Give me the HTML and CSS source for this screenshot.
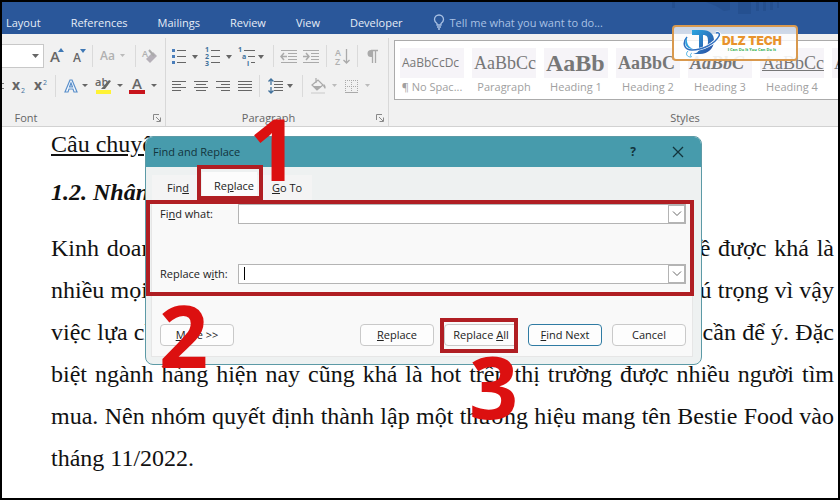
FILE: index.html
```
<!DOCTYPE html>
<html lang="vi">
<head>
  <meta charset="UTF-8" />
  <meta name="viewport" content="width=device-width, initial-scale=1.0"/>
  <title>Find and Replace</title>
  <link rel="stylesheet" href="styles.css">
</head>
<body>
  <div class="window">
    <nav class="tabs">
      <a href="#">Layout</a>
      <a href="#">References</a>
      <a href="#">Mailings</a>
      <a href="#">Review</a>
      <a href="#">View</a>
      <a href="#">Developer</a>
      <a href="#" class="tell-me">
        <svg width="12" height="16" viewBox="0 0 12 16" fill="none" stroke="currentColor" stroke-width="1.3"><path d="M4 11V9.500C2.500 8.500 1.500 7.300 1.500 5.500a4.500 4.500 0 0 1 9 0c0 1.800-1 3-2.500 4V11zM4 13h4M5 15h2"/></svg>
        Tell me what you want to do...
      </a>
      <svg class="circuit" width="120" height="14" viewBox="0 0 120 14"><path fill="#224b87" d="M0 0h3v6H0zM34 0h24v8l-6 1-8-5zM66 0h13v12H66zM84 0h3v9h-3zM91 0h3v9h-3zM98 0h3v8h-3zM105 0h2v6h-2z"/></svg>
    </nav>

    <div class="ribbon">
      <section class="group font-group">
        <div class="tools">
          <button class="size-box" aria-label="Font size"><svg width="7" height="4"><path d="M0 0h7L3.500 4z" fill="#666"/></svg></button>
          <button class="tool" aria-label="Grow font"><svg width="22" height="22"><text x="6" y="17" class="glyph big">A</text><path d="M14 7l3-4 3 4z" fill="#3f78b5"/></svg></button>
          <button class="tool" aria-label="Shrink font"><svg width="22" height="22"><text x="7" y="17" class="glyph mid">A</text><path d="M14 4h6l-3 4z" fill="#3f78b5"/></svg></button>
          <i class="sep"></i>
          <button class="tool off" aria-label="Change case"><svg width="34" height="22"><text x="3" y="15" class="glyph case">Aa</text><path d="M23 9h5l-2.500 3z" fill="#bbb"/></svg></button>
          <i class="sep"></i>
          <button class="tool off" aria-label="Clear formatting"><svg width="22" height="22"><text x="2" y="12" class="glyph small">A</text><path d="M6 14l7-7 4 4-7 7z" fill="#b5b0b8"/><path d="M9 5l5 6" stroke="#aaa" stroke-width="2"/></svg></button>
        </div>
        <div class="tools">
          <span class="stub"></span>
          <button class="tool" aria-label="Subscript"><svg width="22" height="22"><text x="5" y="15" class="glyph x">x</text><text x="14" y="18" class="index">2</text></svg></button>
          <button class="tool" aria-label="Superscript"><svg width="22" height="22"><text x="5" y="15" class="glyph x">x</text><text x="14" y="10" class="index">2</text></svg></button>
          <i class="sep"></i>
          <button class="tool" aria-label="Text effects"><svg width="34" height="22"><path d="M5 17L10 5h2l5 12h-3l-1-3H9l-1 3zM9.500 12h3L11 8z" fill="#f8fbff" stroke="#5a8fca" stroke-width="1.200"/><path d="M22 9h6l-3 3z" fill="#666"/></svg></button>
          <button class="tool" aria-label="Highlight"><svg width="34" height="22"><text x="1" y="11" class="glyph ab">ab</text><path d="M7 14l8-9 2 1-6 8z" fill="#666"/><path fill="#fff335" d="M2 15h15v4H2z"/><path d="M23 9h6l-3 3z" fill="#666"/></svg></button>
          <button class="tool" aria-label="Font color"><svg width="34" height="22"><text x="4" y="14" class="glyph big">A</text><path fill="#c8141c" d="M1 15h16v4H1z"/><path d="M23 9h6l-3 3z" fill="#666"/></svg></button>
        </div>
        <footer>Font</footer>
        <svg class="launcher" width="8" height="8" fill="none" stroke="#888"><path d="M.5 6V.5H6M3 3l4 4M7.500 3.500v4h-4"/></svg>
      </section>

      <section class="group para-group">
        <div class="tools">
          <button class="tool" aria-label="Bullets"><svg width="34" height="22"><path fill="#4a7ebb" d="M5 4h3v3H5zM5 10h3v3H5zM5 16h3v3H5z"/><path d="M10 5.500h9M10 11.500h9M10 17.500h9" stroke="#666"/><path d="M25 10h6l-3 4z" fill="#666"/></svg></button>
          <button class="tool" aria-label="Numbering"><svg width="34" height="22"><text x="4" y="7" class="num">1</text><text x="4" y="14" class="num">2</text><text x="4" y="21" class="num">3</text><path d="M10 5.500h9M10 11.500h9M10 17.500h9" stroke="#666"/><path d="M25 10h6l-3 4z" fill="#666"/></svg></button>
          <button class="tool" aria-label="Multilevel list"><svg width="34" height="22"><text x="3" y="7" class="num">1</text><text x="7" y="14" class="num">a</text><text x="12" y="21" class="num">i</text><path d="M9 5.500h11M13 11.500h7M16 17.500h4" stroke="#666"/><path d="M23 10h6l-3 4z" fill="#666"/></svg></button>
          <i class="sep"></i>
          <button class="tool" aria-label="Decrease indent"><svg width="22" height="22" fill="none" stroke="#aaa"><path d="M3 5.500h16M10 8.500h9M10 11.500h9M10 14.500h9M3 17.500h16"/><path d="M3 11.500h6M6 8l-3 3.500L6 15" stroke-width="1.500"/></svg></button>
          <button class="tool" aria-label="Increase indent"><svg width="22" height="22" fill="none" stroke="#aaa"><path d="M3 5.500h16M11 8.500h8M11 11.500h8M11 14.500h8M3 17.500h16"/><path d="M3 11.500h6M6 8l3 3.500L6 15" stroke-width="1.500"/></svg></button>
          <i class="sep"></i>
          <button class="tool off" aria-label="Sort"><svg width="22" height="22"><text x="4" y="11" class="glyph small">A</text><text x="4" y="20" class="glyph small">Z</text><path d="M15.500 4v14M12.500 15l3 3 3-3" fill="none" stroke="#aaa" stroke-width="1.300"/></svg></button>
          <i class="sep"></i>
          <button class="tool" aria-label="Show marks"><svg width="22" height="22"><path d="M9 5.500h7M10.500 5v13M13.500 5v13" fill="none" stroke="#aaa" stroke-width="1.300"/><path d="M9 5h1.500v7H9a3.500 3.500 0 0 1 0-7z" fill="#aaa"/></svg></button>
        </div>
        <div class="tools">
          <button class="tool" aria-label="Align left"><svg width="22" height="22" stroke="#666"><path d="M5 6.500h14M5 9.500h9M5 12.500h14M5 15.500h9"/></svg></button>
          <button class="tool" aria-label="Center"><svg width="22" height="22" stroke="#666"><path d="M5 6.500h14M7 9.500h10M5 12.500h14M7 15.500h10"/></svg></button>
          <button class="tool" aria-label="Align right"><svg width="22" height="22" stroke="#666"><path d="M5 6.500h14M10 9.500h9M5 12.500h14M10 15.500h9"/></svg></button>
          <button class="tool" aria-label="Justify"><svg width="22" height="22" stroke="#666"><path d="M5 6.500h14M5 9.500h14M5 12.500h14M5 15.500h14"/></svg></button>
          <i class="sep"></i>
          <button class="tool" aria-label="Line spacing"><svg width="34" height="22" fill="none"><path d="M10 6.500h9M10 9.500h9M10 12.500h9M10 15.500h9" stroke="#666"/><path d="M7 4v6M7 12v6M4.500 6.500L7 4l2.500 2.500M4.500 15.500L7 18l2.500-2.500" stroke="#41719c" stroke-width="1.300"/><path d="M23 9h6l-3 4z" fill="#666"/></svg></button>
          <i class="sep"></i>
          <button class="tool" aria-label="Shading"><svg width="34" height="22" fill="none"><path d="M5 10l6-5 5 5-6 5zM9 3v5" stroke="#aaa" stroke-width="1.200"/><path d="M6 11h9l-5 4zM17 9c2 2 2 4 1 5l-2-3z" fill="#aaa"/><path d="M4 17h14v2H4z" fill="#ddd"/><path d="M25 9h5l-2.500 3z" fill="#bbb"/></svg></button>
          <button class="tool" aria-label="Borders"><svg width="34" height="22" fill="none" stroke="#aaa"><path d="M4.500 5v12M10.500 5v12M16.500 5v12M4 5.500h13M4 11.500h13" stroke-dasharray="1 1"/><path d="M4 17.500h13"/><path d="M24 9h5l-2.500 3z" fill="#bbb" stroke="none"/></svg></button>
        </div>
        <footer>Paragraph</footer>
        <svg class="launcher" width="8" height="8" fill="none" stroke="#888"><path d="M.5 6V.5H6M3 3l4 4M7.500 3.500v4h-4"/></svg>
      </section>

      <section class="group styles-group">
        <div class="gallery">
          <button class="style"><span class="preview plain">AaBbCcDc</span>¶ No Spac...</button>
          <button class="style"><span class="preview serif">AaBbCc</span>Paragraph</button>
          <button class="style"><span class="preview h1">AaBb</span>Heading 1</button>
          <button class="style"><span class="preview h2">AaBbC</span>Heading 2</button>
          <button class="style"><span class="preview h3">AaBbC</span>Heading 3</button>
          <button class="style"><span class="preview h4">AaBbCc</span>Heading 4</button>
          <button class="style"><span class="preview serif">AaBbCc</span>Heading 5</button>
          <button class="style"><span class="preview serif">AaBbCc</span>Heading 6</button>
        </div>
        <footer>Styles</footer>
      </section>
    </div>

    <main class="page">
      <p class="underlined">Câu chuyện thương hiệu</p>
      <h2>1.2. Nhân sự</h2>
      <p class="story">
        <span>Kinh doanh thực phẩm ăn uống hiện nay đang là một trong vấn đề được khá là</span>
        <span>nhiều mọi người quan tâm, đặc biệt là các bạn trẻ nên luôn được chú trọng vì vậy</span>
        <span>việc lựa chọn sản phẩm phù hợp để kinh doanh là điều nhóm sẽ rất cần để ý. Đặc</span>
        <span>biệt ngành hàng hiện nay cũng khá là hot trên thị trường được nhiều người tìm</span>
        <span>mua. Nên nhóm quyết định thành lập một thương hiệu mang tên Bestie Food vào</span>
        <span class="last">tháng 11/2022.</span>
      </p>

      <div class="dialog" role="dialog" aria-labelledby="dialog-title">
        <header class="title-bar">
          <span id="dialog-title">Find and Replace</span>
          <button class="help" aria-label="Help">?</button>
          <button aria-label="Close"><svg width="12" height="12" stroke="#12343c" stroke-width="1.300"><path d="M1 1l10 10M11 1L1 11"/></svg></button>
        </header>
        <div class="dialog-tabs">
          <button>Fin<u>d</u></button>
          <button class="active">Re<u>p</u>lace</button>
          <button><u>G</u>o To</button>
        </div>
        <form class="pane">
          <div class="field">
            <label for="find">Fi<u>n</u>d what:</label>
            <div class="combo">
              <input id="find" type="text">
              <button type="button" aria-label="Recent searches"><svg width="10" height="6" fill="none" stroke="#666"><path d="M1 .5l4 4 4-4"/></svg></button>
            </div>
          </div>
          <div class="field">
            <label for="replace">Replace w<u>i</u>th:</label>
            <div class="combo caret">
              <input id="replace" type="text">
              <button type="button" aria-label="Recent replacements"><svg width="10" height="6" fill="none" stroke="#666"><path d="M1 .5l4 4 4-4"/></svg></button>
            </div>
          </div>
          <div class="actions">
            <button type="button" class="more"><u>M</u>ore &gt;&gt;</button>
            <button type="button"><u>R</u>eplace</button>
            <button type="button">Replace <u>A</u>ll</button>
            <button type="button" class="primary"><u>F</u>ind Next</button>
            <button type="button">Cancel</button>
          </div>
        </form>
        <div class="mark mark-tab"></div>
        <div class="mark mark-fields"></div>
        <div class="mark mark-all"></div>
        <b class="step step-1">1</b>
        <b class="step step-2">2</b>
        <b class="step step-3">3</b>
      </div>
    </main>

    <div class="logo">
      <svg width="38" height="31" viewBox="0 0 38 31">
        <defs>
          <linearGradient id="blue" x1="0" y1="0" x2="1" y2="1">
            <stop offset="0" stop-color="#2aa5e0"/>
            <stop offset="1" stop-color="#2b4aa0"/>
          </linearGradient>
        </defs>
        <path fill="url(#blue)" fill-rule="evenodd" d="M9 2h10c8 0 12 4 12 11s-6 13-14 13H10c5-1 6-3 6-6V7H9zM20 7v14c4 0 5-4 5-8s-1-6-5-6z"/>
        <path d="M4 9c-5 6-3 13 5 13 10 0 23-6 27-14 1-2 0-4-3-3" fill="none" stroke="#fff" stroke-width="3"/>
        <path d="M4 9c-5 6-3 13 5 13 10 0 23-6 27-14 1-2 0-4-3-3" fill="none" stroke="#2f6fc0" stroke-width="1.500"/>
        <path d="M4 9C0 15 3 21 10 21c-4-2-7-5-6-12z" fill="#2d9fdd"/>
        <path d="M5 23c-3 3-1 6 3 6M9 25c-2 1-2 3 0 4" fill="none" stroke="#4ab0e4"/>
      </svg>
      <div>
        <strong>DLZ TECH</strong>
        <small>I Can Do It You Can Do It</small>
      </div>
    </div>
  </div>
</body>
</html>
```
FILE: styles.css
```
* {
  box-sizing: border-box;
}
body {
  margin: 0;
  font-family: "Open Sans", "Noto Sans", sans-serif;
  font-size: 11px;
  background: #000;
}
button {
  font: inherit;
  color: inherit;
  padding: 0;
  border: 0;
  background: none;
}
svg {
  display: block;
}
.window {
  position: relative;
  display: flex;
  flex-direction: column;
  min-height: 100vh;
  border: 2px solid #000;
  background: #fff;
  overflow: hidden;
}

/* ribbon tabs */
.tabs {
  position: relative;
  display: flex;
  align-items: center;
  gap: 30px;
  height: 32px;
  padding: 8px 4px 0;
  background: #2a579a;
  white-space: nowrap;
}
.tabs a {
  color: #e6edf7;
  text-decoration: none;
}
.tabs .tell-me {
  display: flex;
  align-items: center;
  gap: 5px;
  color: #a9c1e4;
}
.circuit {
  position: absolute;
  top: 0;
  right: 46px;
  opacity: 0.5;
}

/* ribbon */
.ribbon {
  display: flex;
  height: 93px;
  padding-top: 4px;
  background: #f1f1f1;
  border-bottom: 1px solid #d2d2d2;
  color: #666;
  overflow: hidden;
}
.group {
  position: relative;
  display: flex;
  flex: none;
  flex-direction: column;
  height: 88px;
  border-right: 1px solid #d8d8d8;
}
.font-group {
  width: 164px;
}
.para-group {
  width: 223px;
  padding-left: 1px;
}
.styles-group {
  width: 588px;
  padding-left: 5px;
}
.group footer {
  margin-top: auto;
  text-align: center;
  line-height: 16px;
}
.font-group footer {
  padding-right: 115px;
}
.para-group footer {
  padding-right: 18px;
}
.tools {
  display: flex;
  align-items: center;
  height: 24px;
  margin: 6px 0 0;
}
.size-box {
  display: flex;
  align-items: center;
  justify-content: flex-end;
  width: 42px;
  height: 24px;
  padding-right: 4px;
  background: #fff;
  border: 1px solid #c8c8c8;
  border-left: 0;
}
.sep {
  width: 1px;
  height: 22px;
  margin: 0 4px;
  background: #dadada;
}
.stub {
  width: 2px;
  height: 6px;
  margin-right: 3px;
  border-top: 1px solid #777;
  border-bottom: 1px solid #777;
}
.glyph {
  fill: #666;
  font-weight: 600;
}
.off .glyph {
  fill: #b0b0b0;
}
.big {
  font-size: 15px;
}
.mid {
  font-size: 12px;
}
.case {
  font-size: 12px;
}
.small {
  font-size: 9px;
}
.x {
  font-size: 14px;
  font-weight: 700;
}
.ab {
  font-size: 11px;
}
.index {
  fill: #41719c;
  font-size: 7px;
}
.num {
  fill: #41719c;
  font-size: 7px;
  font-weight: 700;
}
.launcher {
  position: absolute;
  right: 4px;
  bottom: 4px;
}

.gallery {
  display: flex;
  gap: 8px;
  height: 60px;
  margin-top: 2px;
  padding: 7px 5px;
  background: #fff;
  border: 1px solid #ababab;
  overflow: hidden;
}
.style {
  flex: none;
  width: 64px;
  color: #a0a0a0;
  font-size: 11px;
  line-height: 18px;
  white-space: nowrap;
}
.preview {
  display: block;
  height: 30px;
  line-height: 30px;
  background: #f6f4f8;
  color: #777;
  text-align: left;
  padding-left: 2px;
  overflow: hidden;
  font-family: "Liberation Serif", serif;
}
.plain {
  font-family: "Open Sans", sans-serif;
  font-size: 12px;
}
.serif {
  font-size: 18px;
}
.h1 {
  font-size: 24px;
  font-weight: bold;
}
.h2 {
  font-size: 18px;
  font-weight: bold;
}
.h3 {
  font-size: 18px;
  font-weight: bold;
  font-style: italic;
}
.h4 {
  font-size: 18px;
  text-decoration: underline;
}

/* document */
.page {
  position: relative;
  flex: 1;
  padding: 2px 4px 0 49px;
  font-family: "Liberation Serif", "Times New Roman", serif;
  font-size: 24px;
  line-height: 30px;
  color: #111;
}
.page p,
.page h2 {
  margin: 0;
}
.underlined {
  text-decoration: underline;
}
.page h2 {
  margin: 18px 0 20px;
  font-size: 24px;
  font-style: italic;
}
.story {
  line-height: 42px;
}
.story span {
  display: block;
  text-align: justify;
  text-align-last: justify;
}
.story .last {
  text-align-last: left;
}

/* find and replace dialog */
.dialog {
  position: absolute;
  top: 9px;
  left: 143px;
  width: 557px;
  padding-bottom: 7px;
  font-family: "Open Sans", "Noto Sans", sans-serif;
  font-size: 11px;
  line-height: 16px;
  color: #222;
  background: #eef1f1;
  border: 1px solid #5c9aa6;
  border-radius: 8px;
}
.title-bar {
  display: flex;
  align-items: center;
  height: 30px;
  padding: 0 17px 0 7px;
  background: #479bac;
  border-radius: 7px 7px 0 0;
  color: #12343c;
}
.title-bar span {
  flex: 1;
}
.title-bar .help {
  margin-right: 36px;
  font-size: 12px;
  font-weight: 700;
}
.dialog-tabs {
  display: flex;
  align-items: flex-end;
  height: 33px;
  padding-left: 6px;
}
.dialog-tabs button {
  height: 25px;
  padding: 0 10px 0 15px;
  background: #f4f4f4;
}
.dialog-tabs .active {
  height: 28px;
  margin-left: 3px;
  padding: 0 3px 0 12px;
  background: #fcfcfc;
}
.pane {
  margin: 0 8px 0 5px;
  padding: 4px 6px 10px 8px;
  background: #f9f9f9;
  border: 1px solid #e6e6e6;
  border-top: 0;
}
.field {
  display: flex;
  align-items: center;
  margin-bottom: 40px;
}
.field label {
  width: 78px;
}
.combo {
  position: relative;
  display: flex;
  flex: 1;
  height: 20px;
  background: #fff;
  border: 1px solid #b4b4b4;
}
.combo input {
  flex: 1;
  min-width: 0;
  padding: 0 5px;
  border: 0;
  outline: 0;
  background: none;
  font: inherit;
}
.combo button {
  display: flex;
  align-items: center;
  justify-content: center;
  width: 17px;
  border: 1px solid #b4b4b4;
}
.caret::before {
  content: "";
  position: absolute;
  top: 2px;
  left: 5px;
  width: 1px;
  height: 13px;
  background: #000;
}
.actions {
  display: flex;
  gap: 10px;
}
.actions button {
  width: 74px;
  height: 22px;
  background: #fdfdfd;
  border: 1px solid #c9c9c9;
  border-radius: 4px;
}
.actions .more {
  margin-right: auto;
}
.actions .primary {
  border-color: #2f7ba3;
}

/* red markers drawn over the dialog */
.mark {
  position: absolute;
  border: 4px solid #b01e23;
  pointer-events: none;
}
.mark-tab {
  top: 28px;
  left: 51px;
  width: 66px;
  height: 35px;
}
.mark-fields {
  top: 63px;
  left: 0;
  width: 548px;
  height: 96px;
}
.mark-all {
  top: 181px;
  left: 294px;
  width: 78px;
  height: 35px;
}
.step {
  position: absolute;
  color: #dc1010;
  font-size: 86px;
  line-height: 86px;
}
.step-1 {
  top: -32px;
  left: 103px;
}
.step-2 {
  top: 155px;
  left: 13px;
}
.step-3 {
  top: 206px;
  left: 323px;
}

/* channel logo */
.logo {
  position: absolute;
  top: 23px;
  right: 40px;
  display: flex;
  align-items: center;
  gap: 1px;
  width: 126px;
  height: 36px;
  padding-left: 9px;
  background: linear-gradient(rgba(255, 255, 255, 0.75), rgba(255, 255, 255, 0.9));
  border: 2px solid #d9994e;
  border-radius: 4px;
}
.logo strong {
  display: block;
  color: #e8932c;
  font-family: Inter, sans-serif;
  font-size: 12px;
  font-weight: 900;
  line-height: 12px;
}
.logo small {
  display: block;
  color: #2fae4a;
  font-size: 4px;
  font-weight: 700;
  line-height: 5px;
  text-align: center;
}
```
